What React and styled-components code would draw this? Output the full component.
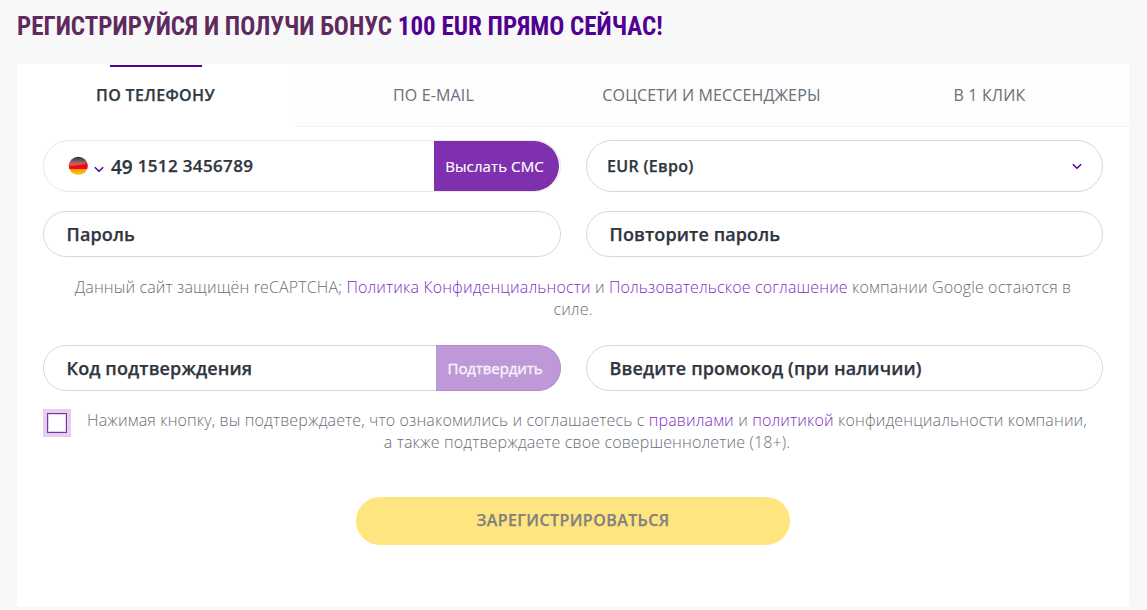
import React from 'react'
import styled, { createGlobalStyle } from 'styled-components'

const GlobalStyle = createGlobalStyle`
  * {
    box-sizing: border-box;
  }
  body {
    margin: 0;
    background: #f8f8f8;
    color: #2f353e;
    font-family: "Open Sans", "Noto Sans", sans-serif;
    overflow: hidden;
  }
`

const Page = styled.main`
  height: 610px;
  padding: 0 18px 3px 17px;
`

const Title = styled.h1`
  display: flex;
  align-items: center;
  height: 64px;
  margin: 0;
  padding-bottom: 10px;
  color: #5f2a5e;
  font-family: "Roboto Condensed", Roboto, sans-serif;
  font-size: 25px;
  font-stretch: 75%;
  font-weight: 700;
  line-height: 30px;
  white-space: pre;

  strong {
    color: #510091;
    font-weight: 700;
  }
`

const Card = styled.section`
  height: 543px;
  background: #fff;
`

const Tabs = styled.nav`
  display: grid;
  grid-template-columns: repeat(4, 1fr);
  height: 63px;
`

const Tab = styled.button`
  display: flex;
  flex-direction: column;
  align-items: center;
  padding: 1px 0 0;
  border: 0;
  border-right: 1px solid #fff;
  border-bottom: 1px solid ${({ $active }) => ($active ? '#fff' : '#f2f2f2')};
  background: ${({ $active }) => ($active ? '#fff' : '#fdfdfd')};
  color: ${({ $active }) => ($active ? '#2f3a45' : '#6a6f78')};
  font-family: inherit;
  font-size: 16px;
  font-weight: ${({ $active }) => ($active ? 600 : 400)};
  letter-spacing: ${({ $active }) => ($active ? 0.35 : 0.14)}px;
  line-height: 22px;
  -webkit-text-stroke: ${({ $active }) => ($active ? 0.25 : 0)}px;

  &::before {
    content: "";
    width: 92px;
    height: 2px;
    margin-bottom: 17px;
    background: ${({ $active }) => ($active ? '#510091' : 'transparent')};
  }
`

const Form = styled.form`
  display: flex;
  flex-direction: column;
  padding: 13px 26px 0;
`

const Row = styled.div`
  display: grid;
  grid-template-columns: 518px 517px;
  gap: 25px;
  margin-bottom: ${({ $space }) => $space || 0}px;
`

const Field = styled.div`
  display: flex;
  align-items: center;
  height: ${({ $tall }) => ($tall ? 52 : 46)}px;
  padding-left: ${({ $tall }) => ($tall ? 20 : 22.5)}px;
  border: 1px solid #d8d8d8;
  border-radius: 26px;
  background: #fff;
  font-size: ${({ $tall }) => ($tall ? 16 : 18)}px;
  font-weight: 600;
  letter-spacing: ${({ $tall }) => ($tall ? 0.3 : 0.12)}px;
  -webkit-text-stroke: 0.25px;
`

const PhoneField = styled(Field)`
  padding-left: 24px;
  padding-right: 1px;
  border-color: #e7e7e7;
`

const PhoneNumber = styled.span`
  padding-bottom: 1px;
  font-size: 17px;
  letter-spacing: 0.35px;
`

const Flag = styled.svg`
  width: 20px;
  height: 20px;
`

const CodeArrow = styled.svg`
  width: 10px;
  height: 7px;
  margin: 6px 7px 0 6px;
`

const CountryCode = styled.span`
  margin-right: 5px;
  padding-top: 2px;
  font-size: 19px;
  letter-spacing: 0;
`

const CurrencyArrow = styled.svg`
  width: 10px;
  height: 7px;
  margin: 1px 20px 0 auto;
`

const FieldButton = styled.button`
  align-self: stretch;
  flex: none;
  width: 125px;
  margin-left: auto;
  padding: 0 4px 0 0;
  border: 0;
  border-radius: 0 25px 25px 0;
  background: #7e30ae;
  color: #fff;
  font-family: inherit;
  font-size: 15px;
  letter-spacing: 0.1px;
  -webkit-text-stroke: 0.15px;

  &:disabled {
    margin: -1px -1px -1px auto;
    padding: 0 6px 1px 0;
    border: 1px solid #b38bcd;
    border-left: 0;
    background: #be98d7;
    color: #f8f3fb;
    letter-spacing: -0.1px;
    -webkit-text-stroke: 0.4px;
  }
`

const Note = styled.p`
  margin: 0;
  color: #6a6e76;
  font-size: 16px;
  font-weight: 300;
  letter-spacing: 0.13px;
  line-height: 22px;
  text-align: center;
  white-space: nowrap;

  a {
    color: #7e30c2;
    text-decoration: none;
  }
`

const CaptchaNote = styled(Note)`
  margin-bottom: 25px;
`

const Agreement = styled.div`
  display: flex;
  gap: 16px;
  margin-top: 18px;
`

const Checkbox = styled.input`
  appearance: none;
  flex: none;
  width: 20px;
  height: 20px;
  margin: 4px;
  border: 1px solid #7e30ae;
  box-shadow: 0 0 0 4px #e1d1ee, inset 0 0 0 1px #e1d1ee;
  background: #fff;
`

const SubmitButton = styled.button`
  align-self: center;
  width: 434px;
  height: 48px;
  margin-top: 44px;
  padding: 0 0 2px;
  border: 0;
  border-radius: 24px;
  background: #ffe57f;
  color: #828180;
  font-family: inherit;
  font-size: 16px;
  font-weight: 600;
  letter-spacing: 0.43px;
  -webkit-text-stroke: 0.25px;
`

const tabs = ['ПО ТЕЛЕФОНУ', 'ПО E-MAIL', 'СОЦСЕТИ И МЕССЕНДЖЕРЫ', 'В 1 КЛИК']

const GermanFlag = () => (
  <Flag viewBox="0 0 20 20">
    <defs>
      <clipPath id="flagCircle"><ellipse cx="10.3" cy="9.8" rx="9.6" ry="9" /></clipPath>
      <linearGradient id="black" x1="0" y1="0" x2="0" y2="1">
        <stop offset="0" stopColor="#222" />
        <stop offset=".9" stopColor="#777" />
      </linearGradient>
      <linearGradient id="gold" x1="0" y1="0" x2="0" y2="1">
        <stop offset="0" stopColor="#f59a00" />
        <stop offset="1" stopColor="#ffd21c" />
      </linearGradient>
    </defs>
    <g clipPath="url(#flagCircle)">
      <path fill="url(#black)" d="M0 0h20v7H0z" />
      <path fill="#e60d14" d="M0 6.6h20v7H0z" />
      <path fill="url(#gold)" d="M0 13h20v7H0z" />
      <path fill="#fff" fillOpacity=".25" d="M0 6.6h20Q14 10 0 10z" />
    </g>
  </Flag>
)

const ArrowPath = () => (
  <path d="M.8 1.2 5 5.2l4.2-4" fill="none" stroke="#510091" strokeWidth="1.5" />
)

const App = () => {
  return (
    <>
      <GlobalStyle />
      <Page>
        <Title>
          <span>РЕГИСТРИРУЙСЯ И ПОЛУЧИ БОНУС <strong>100 EUR ПРЯМО СЕЙЧАС!</strong></span>
        </Title>
        <Card>
          <Tabs>
            {tabs.map((tab, i) => (
              <Tab key={tab} $active={i === 0}><span>{tab}</span></Tab>
            ))}
          </Tabs>
          <Form>
            <Row $space={19}>
              <PhoneField $tall>
                <GermanFlag />
                <CodeArrow viewBox="0 0 10 7"><ArrowPath /></CodeArrow>
                <CountryCode>49</CountryCode>
                <PhoneNumber>1512 3456789</PhoneNumber>
                <FieldButton type="button">Выслать СМС</FieldButton>
              </PhoneField>
              <Field $tall>
                <span>EUR (Евро)</span>
                <CurrencyArrow viewBox="0 0 10 7"><ArrowPath /></CurrencyArrow>
              </Field>
            </Row>
            <Row $space={19}>
              <Field><span>Пароль</span></Field>
              <Field><span>Повторите пароль</span></Field>
            </Row>
            <CaptchaNote>
              Данный сайт защищён reCAPTCHA; <a>Политика Конфиденциальности</a> и <a>Пользовательское соглашение</a> компании Google остаются в<br />силе.
            </CaptchaNote>
            <Row>
              <Field>
                <span>Код подтверждения</span>
                <FieldButton type="button" disabled>Подтвердить</FieldButton>
              </Field>
              <Field><span>Введите промокод (при наличии)</span></Field>
            </Row>
            <Agreement>
              <Checkbox type="checkbox" />
              <Note>
                Нажимая кнопку, вы подтверждаете, что ознакомились и соглашаетесь с <a>правилами</a> и <a>политикой</a> конфиденциальности компании,<br />а также подтверждаете свое совершеннолетие (18+).
              </Note>
            </Agreement>
            <SubmitButton type="button">ЗАРЕГИСТРИРОВАТЬСЯ</SubmitButton>
          </Form>
        </Card>
      </Page>
    </>
  )
}

export default App
